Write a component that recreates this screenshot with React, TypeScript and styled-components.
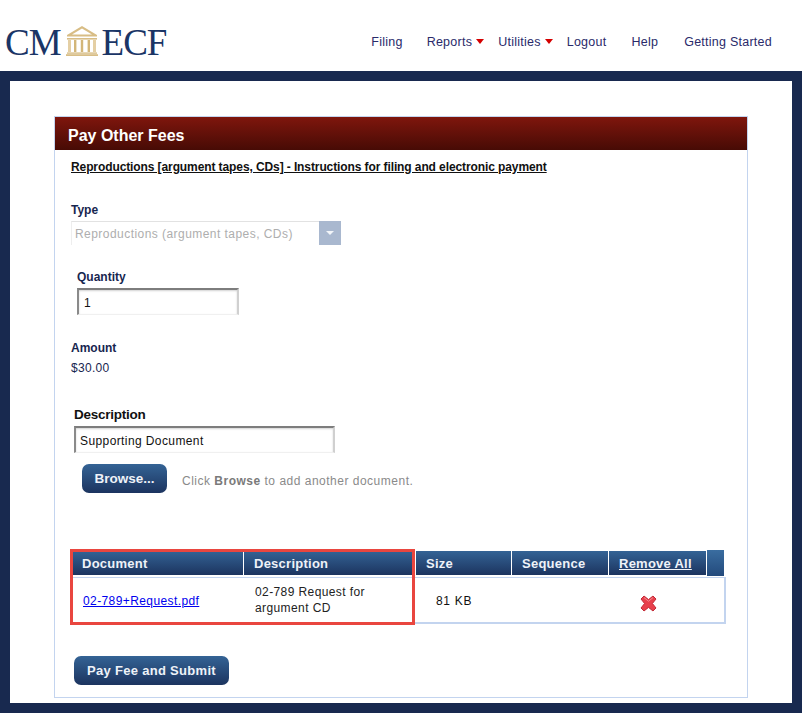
import styled, { createGlobalStyle } from "styled-components"

const GlobalStyle = createGlobalStyle`
    html, body {
        margin: 0;
        padding: 0;
        background: #fff;
    }
    body {
        font-family: "Liberation Sans", Arial, sans-serif;
    }
`

const App = () => {
    return (
        <Page>
            <GlobalStyle />
            <Header>
                <Logo>
                    <span>CM</span>
                    <Temple />
                    <span>ECF</span>
                </Logo>
                <Nav>
                    <NavItem $left={0}>Filing</NavItem>
                    <NavItem $left={24} $menu>Reports</NavItem>
                    <NavItem $left={14} $menu>Utilities</NavItem>
                    <NavItem $left={14}>Logout</NavItem>
                    <NavItem $left={25}>Help</NavItem>
                    <NavItem $left={26}>Getting Started</NavItem>
                </Nav>
            </Header>

            <Frame>
                <Sheet>
                    <Panel>
                        <Title>Pay Other Fees</Title>
                        <Content>
                            <Instructions>Reproductions [argument tapes, CDs] - Instructions for filing and electronic payment</Instructions>

                            <TypeLabel>Type</TypeLabel>
                            <SelectBox>
                                <span>Reproductions (argument tapes, CDs)</span>
                                <SelectArrow />
                            </SelectBox>

                            <QuantityLabel>Quantity</QuantityLabel>
                            <QuantityInput defaultValue="1" />

                            <AmountLabel>Amount</AmountLabel>
                            <AmountValue>$30.00</AmountValue>

                            <DescriptionLabel>Description</DescriptionLabel>
                            <DescriptionInput defaultValue="Supporting Document" />

                            <BrowseRow>
                                <BrowseButton>Browse...</BrowseButton>
                                <Hint>Click <b>Browse</b> to add another document.</Hint>
                            </BrowseRow>

                            <DocTable>
                                <HeadRow>
                                    {columns.map((col) => (
                                        <HeadCell key={col.name} $width={col.width}>
                                            {col.name === "Remove All" ? <u>{col.name}</u> : col.name}
                                        </HeadCell>
                                    ))}
                                    <HeadEnd />
                                </HeadRow>
                                <BodyRow>
                                    <LinkCell><a href="#">02-789+Request.pdf</a></LinkCell>
                                    <TextCell>02-789 Request for<br />argument CD</TextCell>
                                    <SizeCell>81 KB</SizeCell>
                                    <SequenceCell />
                                    <RemoveCell><RemoveIcon /></RemoveCell>
                                </BodyRow>
                                <Highlight />
                            </DocTable>

                            <SubmitButton>Pay Fee and Submit</SubmitButton>
                        </Content>
                    </Panel>
                </Sheet>
            </Frame>
        </Page>
    )
}

export default App


const Temple = () => (
    <TempleSvg viewBox="0 0 32 30">
        <path d="M16 0 L31 9 L31 10.5 L1 10.5 L1 9 Z M16 2.4 L6 8.6 L26 8.6 Z" fill="#d8bd85" fillRule="evenodd" />
        <rect x="1" y="12" width="30" height="1.6" fill="#d8bd85" />
        <rect x="2" y="14" width="3" height="12" fill="#e4cfa4" />
        <rect x="8" y="14" width="2.4" height="12" fill="#d3b679" />
        <rect x="14.8" y="14" width="2.4" height="12" fill="#d3b679" />
        <rect x="21.6" y="14" width="2.4" height="12" fill="#d3b679" />
        <rect x="27" y="14" width="3" height="12" fill="#e4cfa4" />
        <rect x="1" y="26.4" width="30" height="1.4" fill="#d8bd85" />
        <rect x="0" y="28.2" width="32" height="1.8" fill="#d8bd85" />
    </TempleSvg>
)

const RemoveIcon = () => (
    <svg width="17" height="17" viewBox="0 0 17 17">
        <path
            d="M4 1 L8.5 4.6 L13 1 L16 4 L12.4 8.5 L16 13 L13 16 L8.5 12.4 L4 16 L1 13 L4.6 8.5 L1 4 Z"
            fill="#e8404c"
            stroke="#c22a36"
            strokeWidth="1"
            strokeLinejoin="round"
        />
        <path d="M4 2.6 L8.5 6.2 L13 2.6" fill="none" stroke="#f58a90" strokeWidth="1" />
    </svg>
)

const columns = [
    { name: "Document", width: 172 },
    { name: "Description", width: 172 },
    { name: "Size", width: 96 },
    { name: "Sequence", width: 97 },
    { name: "Remove All", width: 98 },
]

const navy = "#18294f"

const Page = styled.div`
    width: 802px;
    height: 713px;
    overflow: hidden;
`

const Header = styled.div`
    height: 71px;
    display: flex;
    align-items: flex-start;
    background: #fff;
`

const Logo = styled.div`
    display: flex;
    align-items: flex-start;
    margin: 23px 0 0 5px;
    font-family: "Liberation Serif", "Times New Roman", serif;
    font-size: 37px;
    line-height: 40px;
    letter-spacing: -1px;
    color: #1a3566;
`

const TempleSvg = styled.svg`
    width: 32px;
    height: 30px;
    margin: 3px 4px 0 5px;
`

const Nav = styled.div`
    display: flex;
    margin: 34px 0 0 auto;
    padding-right: 30px;
`

const NavItem = styled.div<{ $left: number; $menu?: boolean }>`
    margin-left: ${(p) => p.$left}px;
    font-size: 12.5px;
    line-height: 16px;
    letter-spacing: 0.25px;
    color: #2a2a6a;
    padding-right: ${(p) => (p.$menu ? "12px" : "0")};
    position: relative;

    &::after {
        content: ${(p) => (p.$menu ? '""' : "none")};
        position: absolute;
        right: 0;
        top: 5px;
        border-left: 4px solid transparent;
        border-right: 4px solid transparent;
        border-top: 5px solid #d40000;
    }
`

const Frame = styled.div`
    height: 642px;
    box-sizing: border-box;
    padding: 10px;
    background: ${navy};
`

const Sheet = styled.div`
    height: 622px;
    box-sizing: border-box;
    padding: 35px 44px 0;
    background: #fff;
`

const Panel = styled.div`
    width: 694px;
    height: 582px;
    box-sizing: border-box;
    border: 1px solid #c3d4ef;
`

const Title = styled.div`
    height: 33px;
    padding-left: 13px;
    font-size: 16px;
    font-weight: bold;
    line-height: 37px;
    color: #fff;
    background: linear-gradient(#7f160d, #470b05);
`

const Content = styled.div`
    display: flex;
    flex-direction: column;
    align-items: flex-start;
    padding-left: 16px;
`

const Instructions = styled.div`
    margin-top: 10px;
    font-size: 12px;
    font-weight: bold;
    line-height: 14px;
    letter-spacing: -0.1px;
    color: #111;
    text-decoration: underline;
`

const FieldLabel = styled.div`
    font-size: 12px;
    font-weight: bold;
    line-height: 14px;
    color: #17264f;
`

const TypeLabel = styled(FieldLabel)`
    margin-top: 29px;
`

const SelectBox = styled.div`
    margin-top: 4px;
    width: 270px;
    height: 24px;
    box-sizing: border-box;
    padding-left: 3px;
    display: flex;
    justify-content: space-between;
    font-size: 12px;
    line-height: 24px;
    letter-spacing: 0.45px;
    color: #aeaeae;
    border-top: 1px solid #e2e2e2;
    border-left: 1px solid #eeeeee;
`

const SelectArrow = styled.div`
    width: 22px;
    height: 24px;
    margin-top: -1px;
    position: relative;
    background: #a9b8cf;

    &::after {
        content: "";
        position: absolute;
        left: 7px;
        top: 10px;
        border-left: 4px solid transparent;
        border-right: 4px solid transparent;
        border-top: 4px solid #f2f5f9;
    }
`

const QuantityLabel = styled(FieldLabel)`
    margin: 25px 0 0 6px;
`

const SunkenInput = styled.input`
    display: block;
    box-sizing: border-box;
    padding: 2px 0 0 5px;
    font-family: "Liberation Sans", Arial, sans-serif;
    font-size: 12px;
    color: #111;
    background: #fff;
    outline: none;
    border-style: solid;
    border-width: 2px 2px 1px 2px;
    border-color: #7d7d7d #d0d0d0 #f0f0f0 #8a8a8a;
    box-shadow: inset 0 1px 2px rgba(0, 0, 0, 0.18);
`

const QuantityInput = styled(SunkenInput)`
    width: 162px;
    height: 27px;
    margin: 4px 0 0 6px;
`

const AmountLabel = styled(FieldLabel)`
    margin-top: 26px;
`

const AmountValue = styled.div`
    margin-top: 6px;
    font-size: 12px;
    line-height: 14px;
    letter-spacing: 0.3px;
    color: #17264f;
`

const DescriptionLabel = styled.div`
    margin: 32px 0 0 0;
    padding-left: 3px;
    font-size: 13.5px;
    font-weight: bold;
    line-height: 16px;
    letter-spacing: -0.25px;
    color: #111;
`

const DescriptionInput = styled(SunkenInput)`
    width: 261px;
    height: 27px;
    margin: 3px 0 0 3px;
    padding-left: 4px;
    letter-spacing: 0.4px;
`

const BrowseRow = styled.div`
    display: flex;
    align-items: center;
    margin: 11px 0 0 11px;
`

const NavyButton = styled.button`
    box-sizing: border-box;
    padding: 0;
    border: none;
    font-family: "Liberation Sans", Arial, sans-serif;
    font-weight: bold;
    color: #eef2f8;
    background: linear-gradient(#346395, #1c345f);
`

const BrowseButton = styled(NavyButton)`
    width: 85px;
    height: 29px;
    padding-bottom: 1px;
    font-size: 13.5px;
    border-radius: 7px;
`

const Hint = styled.div`
    margin: 5px 0 0 15px;
    font-size: 12px;
    line-height: 14px;
    letter-spacing: 0.5px;
    color: #8a8a8a;

    b {
        color: #7a7a7a;
    }
`

const DocTable = styled.div`
    position: relative;
    margin: 57px 0 0 1px;
    width: 654px;
`

const HeadRow = styled.div`
    display: flex;
    align-items: flex-start;
    height: 27px;
`

const HeadCell = styled.div<{ $width: number }>`
    width: ${(p) => p.$width}px;
    height: 24px;
    margin-top: 1px;
    box-sizing: border-box;
    padding-left: 10px;
    border-right: 1px solid #fff;
    font-size: 13px;
    font-weight: bold;
    line-height: 25px;
    letter-spacing: 0.25px;
    color: #eef2f8;
    background: linear-gradient(#346395, #1c345f);
`

const HeadEnd = styled.div`
    width: 17px;
    height: 26px;
    background: linear-gradient(#3a6da0, #234a7c);
`

const BodyRow = styled.div`
    display: flex;
    align-items: center;
    width: 654px;
    height: 47px;
    box-sizing: border-box;
    border: 1px solid #c3d4ef;
    border-right-width: 2px;
    border-bottom-width: 2px;
    font-size: 12px;
    line-height: 16px;
    letter-spacing: 0.4px;
    color: #222;
`

const LinkCell = styled.div`
    width: 171px;
    box-sizing: border-box;
    padding: 2px 0 0 10px;

    a {
        color: #0000ee;
    }
`

const TextCell = styled.div`
    width: 172px;
    box-sizing: border-box;
    padding-left: 11px;
`

const SizeCell = styled.div`
    width: 96px;
    box-sizing: border-box;
    padding: 2px 0 0 20px;
    letter-spacing: 0.7px;
    color: #111;
`

const SequenceCell = styled.div`
    width: 97px;
`

const RemoveCell = styled.div`
    box-sizing: border-box;
    padding: 6px 0 0 31px;
    display: flex;
`

const Highlight = styled.div`
    position: absolute;
    left: -2px;
    top: -1px;
    width: 345px;
    height: 76px;
    box-sizing: border-box;
    border: 3px solid #e9463f;
    pointer-events: none;
`

const SubmitButton = styled(NavyButton)`
    width: 155px;
    height: 29px;
    margin: 32px 0 0 3px;
    font-size: 13px;
    letter-spacing: 0.3px;
    border-radius: 7px;
`
